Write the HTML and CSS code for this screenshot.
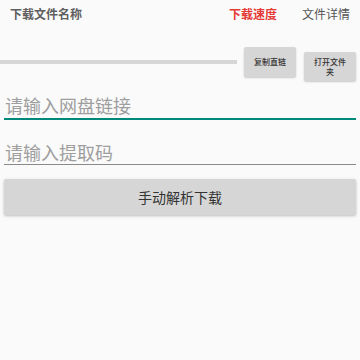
FILE: index.html
```html
<!DOCTYPE html>
<html lang="zh-CN">

<head>
    <meta charset="UTF-8">
    <meta name="viewport" content="width=device-width, initial-scale=1.0">
    <title>下载</title>
    <link rel="stylesheet" href="styles.css">
</head>

<body>
    <div class="wrapper">
        <section class="topBar">
            <div class="fileName">下载文件名称</div>
            <div class="tabs">
                <span class="tab speed">下载速度</span>
                <span class="tab">文件详情</span>
            </div>
        </section>
        <section class="progressRow">
            <div class="progress"></div>
            <div class="smallBtn copyBtn">复制直链</div>
            <div class="smallBtn openBtn">打开文件夹</div>
        </section>
        <div class="field linkField">请输入网盘链接</div>
        <div class="field codeField">请输入提取码</div>
        <div class="bigBtn">手动解析下载</div>
    </div>
</body>

</html>
```

FILE: styles.css
```css
* {
    margin: 0;
    padding: 0;
    box-sizing: border-box;
}

body {
    background: #fafafa;
    font-family: "Noto Sans CJK SC", "Noto Sans", sans-serif;
}

.wrapper {
    width: 360px;
    height: 360px;
}

.topBar {
    display: flex;
    justify-content: space-between;
    padding: 6px 10px 0 10px;
    font-size: 12px;
    line-height: 16px;
}

.fileName {
    color: #5f5f5f;
    font-weight: bold;
}

.tabs {
    display: flex;
    gap: 25px;
}

.tab {
    color: #555;
}

.speed {
    color: #e53935;
    font-weight: bold;
}

.progressRow {
    display: flex;
    align-items: flex-start;
    margin-top: 25px;
    padding-right: 4px;
}

.progress {
    flex: 1;
    height: 4px;
    margin-top: 13px;
    margin-right: 7px;
    background: #d6d6d6;
}

.smallBtn {
    width: 52px;
    background: #d6d6d6;
    border-radius: 2px;
    box-shadow: 0px 1px 2px rgba(0, 0, 0, .2);
    color: #333;
    font-size: 8px;
    font-weight: 500;
    line-height: 10px;
    text-align: center;
}

.copyBtn {
    height: 30px;
    line-height: 30px;
    margin-right: 8px;
}

.openBtn {
    height: 29px;
    margin-top: 5px;
    padding: 5px 9px 0 9px;
}

.field {
    margin: 0 4px;
    color: #9e9e9e;
    font-size: 18px;
    line-height: 23px;
    padding-left: 1px;
}

.linkField {
    margin-top: 13px;
    padding-bottom: 1px;
    border-bottom: 2px solid #00897b;
}

.codeField {
    margin-top: 21px;
    border-bottom: 1px solid #8a8a8a;
}

.bigBtn {
    margin: 14px 4px 0 4px;
    height: 36px;
    line-height: 36px;
    background: #d6d6d6;
    border-radius: 2px;
    box-shadow: 0px 1px 3px rgba(0, 0, 0, .25);
    color: #333;
    font-size: 14px;
    text-align: center;
}
```
